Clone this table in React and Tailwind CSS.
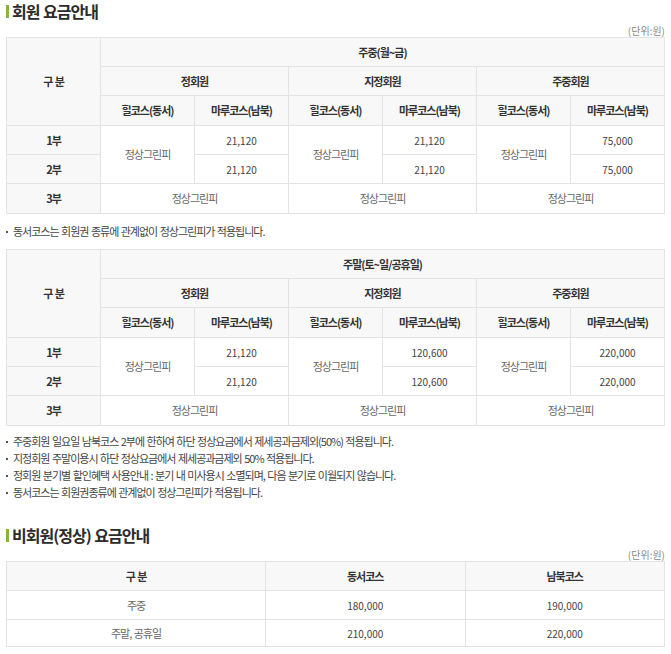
import React from "react";

const cell = "border border-[#e3e3e3] text-center align-middle";
const head = cell + " bg-[#f8f8f8] font-bold text-[#333] text-[11px] tracking-[-1px]";
const green = cell + " text-[#666] text-[11px] tracking-[-1px]";
const num = cell + " text-[#444] text-[10px]";

const Title = ({ children, className }) => (
    <h2 className={"flex items-center h-[20px] " + (className || "")}>
        <span className="w-[3px] h-[13px] bg-[#86b43e]" />
        <span className="ml-[3px] text-[16px] leading-[20px] font-bold text-[#2b2b2b] tracking-[-1px]">{children}</span>
    </h2>
);

const Unit = () => (
    <div className="pt-[4px] text-right text-[10px] leading-[12px] text-[#888]">(단위:원)</div>
);

const Bullet = ({ children }) => (
    <li className="flex items-center h-[17px]">
        <span className="w-[2px] h-[2px] bg-[#555] mr-[5px] shrink-0" />
        <span>{children}</span>
    </li>
);

const MemberTable = ({ label, prices }) => {
    return (
        <table className="w-full table-fixed border-collapse">
            <tbody>
                <tr className="h-[29px]">
                    <th rowSpan={3} className={head}>구 분</th>
                    <th colSpan={6} className={head}>{label}</th>
                </tr>
                <tr className="h-[29px]">
                    <th colSpan={2} className={head}>정회원</th>
                    <th colSpan={2} className={head}>지정회원</th>
                    <th colSpan={2} className={head}>주중회원</th>
                </tr>
                <tr className="h-[30px]">
                    {[0, 1, 2].map((i) => (
                        <React.Fragment key={i}>
                            <th className={head}>힐코스(동서)</th>
                            <th className={head}>마루코스(남북)</th>
                        </React.Fragment>
                    ))}
                </tr>
                <tr className="h-[29px]">
                    <th className={head}>1부</th>
                    <td rowSpan={2} className={green}>정상그린피</td>
                    <td className={num}>{prices[0]}</td>
                    <td rowSpan={2} className={green}>정상그린피</td>
                    <td className={num}>{prices[1]}</td>
                    <td rowSpan={2} className={green}>정상그린피</td>
                    <td className={num}>{prices[2]}</td>
                </tr>
                <tr className="h-[29px]">
                    <th className={head}>2부</th>
                    <td className={num}>{prices[0]}</td>
                    <td className={num}>{prices[1]}</td>
                    <td className={num}>{prices[2]}</td>
                </tr>
                <tr className="h-[30px]">
                    <th className={head}>3부</th>
                    <td colSpan={2} className={green}>정상그린피</td>
                    <td colSpan={2} className={green}>정상그린피</td>
                    <td colSpan={2} className={green}>정상그린피</td>
                </tr>
            </tbody>
        </table>
    );
};

export default function App() {
    return (
        <div className="bg-white min-h-[654px] px-[6px] pt-[1px] font-['Noto_Sans_CJK_KR',sans-serif] text-[#444] [word-spacing:1px]">
            <Title>회원 요금안내</Title>
            <Unit />
            <MemberTable label="주중(월~금)" prices={["21,120", "21,120", "75,000"]} />
            <p className="py-[12px] text-[11px] leading-[11px] text-[#444] tracking-[-1px] flex items-center">
                <span className="w-[2px] h-[2px] bg-[#555] mr-[5px]" />
                동서코스는 회원권 종류에 관계없이 정상그린피가 적용됩니다.
            </p>
            <MemberTable label="주말(토~일/공휴일)" prices={["21,120", "120,600", "220,000"]} />
            <ul className="pt-[7px] text-[11px] text-[#444] tracking-[-1px]">
                <Bullet>주중회원 일요일 남북코스 2부에 한하여 하단 정상요금에서 제세공과금제외(50%) 적용됩니다.</Bullet>
                <Bullet>지정회원 주말이용시 하단 정상요금에서 제세공과금제외 50% 적용됩니다.</Bullet>
                <Bullet>정회원 분기별 할인혜택 사용안내 : 분기 내 미사용시 소멸되며, 다음 분기로 이월되지 않습니다.</Bullet>
                <Bullet>동서코스는 회원권종류에 관계없이 정상그린피가 적용됩니다.</Bullet>
            </ul>
            <Title className="mt-[24px]">비회원(정상) 요금안내</Title>
            <Unit />
            <table className="w-full table-fixed border-collapse">
                <colgroup>
                    <col className="w-[259px]" />
                    <col />
                    <col />
                </colgroup>
                <tbody>
                    <tr className="h-[29px]">
                        <th className={head}>구 분</th>
                        <th className={head}>동서코스</th>
                        <th className={head}>남북코스</th>
                    </tr>
                    <tr className="h-[29px]">
                        <td className={green}>주중</td>
                        <td className={num}>180,000</td>
                        <td className={num}>190,000</td>
                    </tr>
                    <tr className="h-[27px]">
                        <td className={green}>주말, 공휴일</td>
                        <td className={num}>210,000</td>
                        <td className={num}>220,000</td>
                    </tr>
                </tbody>
            </table>
        </div>
    );
}
